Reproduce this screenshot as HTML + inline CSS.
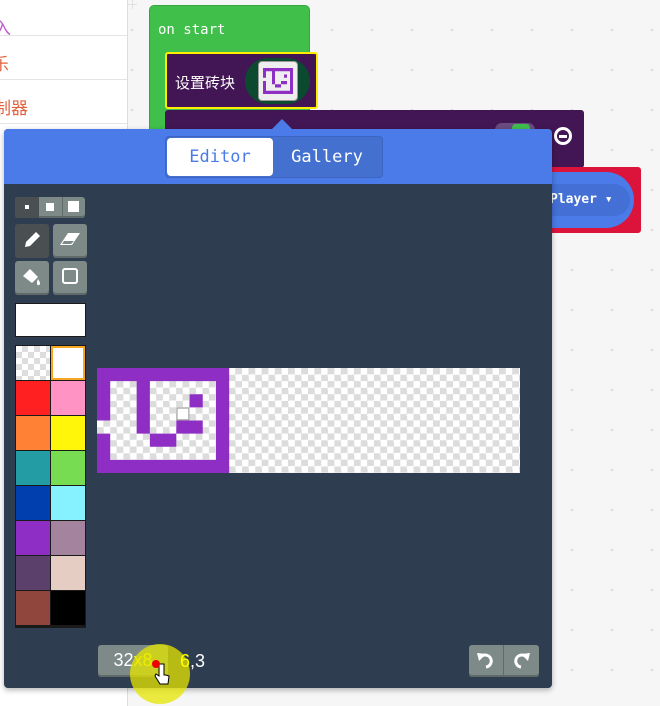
<!DOCTYPE html>
<html><head><meta charset="utf-8"><style>
body{margin:0;width:660px;height:706px;position:relative;overflow:hidden;background:#f6f6f6;font-family:"Liberation Sans","Noto Sans CJK SC",sans-serif}
.a{position:absolute}
.grid{left:128px;top:0;width:532px;height:706px;background-image:linear-gradient(#e2e2e2,#e2e2e2),linear-gradient(#e2e2e2,#e2e2e2);background-size:9px 1px,1px 9px;background-repeat:no-repeat}
.side{left:0;top:0;width:127px;height:706px;background:#fff;border-right:1px solid #ddd}
.ln{left:0;width:127px;height:1px;background:#e4e4e4}
.mono{font-family:"DejaVu Sans Mono","Liberation Mono",monospace}
.tb{background:#7e8a88;border-radius:3px;box-shadow:inset 0 -2px 0 #5f6968}
</style></head><body>
<div class="a" style="left:128px;top:0;width:532px;height:706px;background-image:linear-gradient(#e0e0e0,#e0e0e0),linear-gradient(#e0e0e0,#e0e0e0);background-size:9px 1px,1px 9px;background-position:0 4px,4px 0;background-repeat:no-repeat"></div>
<div class="a" style="left:128px;top:0;width:532px;height:706px;background:radial-gradient(circle,#dadada 1px,transparent 1.5px) 24px 10px/40px 40px"></div>
<div class="a side">
<div class="a ln" style="top:35px"></div><div class="a ln" style="top:79px"></div><div class="a ln" style="top:123px"></div>
<div class="a" style="left:-6px;top:14px;color:#c05ad0;font-size:17px">入</div>
<div class="a" style="left:-8px;top:50px;color:#e0623e;font-size:17px">乐</div>
<div class="a" style="left:-6px;top:94px;color:#e0623e;font-size:17px">制器</div>
</div>
<!-- on start -->
<div class="a" style="left:149px;top:5px;width:159px;height:140px;background:#40bf4a;border-radius:5px;border:1px solid #38a540"></div>
<div class="a mono" style="left:158px;top:22px;color:#fff;font-size:14px">on start</div>
<!-- purple big block -->
<div class="a" style="left:165px;top:110px;width:419px;height:58px;background:#421654;border-radius:3px"></div>
<div class="a" style="left:495px;top:123px;width:40px;height:14px;background:#6a4c80;border-radius:7px"></div>
<div class="a" style="left:512px;top:124px;width:18px;height:14px;background:#3fbd4c;border-radius:4px"></div>
<div class="a" style="left:554px;top:127px;width:18px;height:18px;border:3px solid #fff;border-radius:50%;box-sizing:border-box"><div class="a" style="left:2px;top:5px;width:8px;height:3px;background:#fff"></div></div>
<!-- red block -->
<div class="a" style="left:548px;top:167px;width:93px;height:66px;background:#dc143c;border-radius:3px"></div>
<div class="a" style="left:520px;top:172px;width:114px;height:56px;background:#4a7be8;border-radius:28px"></div>
<div class="a" style="left:520px;top:184px;width:110px;height:32px;background:#4470d6;border-radius:16px"></div>
<div class="a mono" style="left:550px;top:192px;color:#fff;font-size:13px;font-weight:bold">Player ▾</div>
<!-- set tile block -->
<div class="a" style="left:165px;top:52px;width:153px;height:57px;background:#421654;border:2px solid #ffee00;border-radius:3px;box-sizing:border-box"></div>
<div class="a" style="left:175px;top:72px;color:#fff;font-size:15px">设置砖块</div>
<div class="a" style="left:245px;top:58px;width:65px;height:46px;background:#0b4a2e;border-radius:23px"></div>
<div class="a" style="left:258px;top:61px;width:40px;height:40px;background:#eee;border-radius:4px;border:1px solid #999;box-sizing:border-box">
<svg width="30" height="26" style="position:absolute;left:4px;top:6px" viewBox="0 0 10 8" preserveAspectRatio="none"><path fill="#8e2ec4" d="M0 0h10v1H0zM0 7h10v1H0zM0 1h1v2H0zM0 4h1v3H0zM9 1h1v6H9zM3 1h1v4H3zM7 2h1v1H7zM6 4h2v1H6zM4 5h2v1H4z"/></svg></div>
<!-- dialog -->
<div class="a" style="left:4px;top:129px;width:548px;height:559px;background:#2e3d50;border-radius:4px;overflow:hidden;box-shadow:0 2px 6px rgba(0,0,0,.3)">
<div class="a" style="left:0;top:0;width:548px;height:55px;background:#4a7be8"></div>
</div>
<div class="a" style="left:271px;top:119px;width:0;height:0;border-left:11px solid transparent;border-right:11px solid transparent;border-bottom:11px solid #4a7be8"></div>
<div class="a" style="left:165px;top:136px;width:218px;height:42px;background:#4470d0;border-radius:4px;border:1px solid #3c64c0;box-sizing:border-box"></div>
<div class="a mono" style="left:167px;top:138px;width:106px;height:38px;background:#fff;border-radius:4px;color:#4a7be8;font-size:17px;text-align:center;line-height:38px">Editor</div>
<div class="a mono" style="left:273px;top:138px;width:108px;height:38px;color:#fff;font-size:17px;text-align:center;line-height:38px">Gallery</div>
<!-- tools -->
<div class="a tb" style="left:15px;top:197px;width:70px;height:21px"></div>
<div class="a" style="left:15px;top:197px;width:24px;height:21px;background:#4a4f52;border-radius:3px 0 0 3px"></div>
<div class="a" style="left:25px;top:205px;width:4px;height:4px;background:#fff"></div>
<div class="a" style="left:46px;top:203px;width:8px;height:8px;background:#fff"></div>
<div class="a" style="left:68px;top:201px;width:11px;height:11px;background:#fff"></div>
<div class="a" style="left:62px;top:197px;width:1px;height:21px;background:#5f6968"></div>
<div class="a" style="left:15px;top:224px;width:34px;height:34px;background:#4a4f52;border-radius:3px"></div>
<svg class="a" style="left:22px;top:230px" width="20" height="20" viewBox="0 0 20 20"><path fill="#fff" d="M14 2l4 4-10 10-5 1 1-5z"/></svg>
<div class="a tb" style="left:53px;top:224px;width:34px;height:34px"></div>
<svg class="a" style="left:58px;top:231px" width="24" height="18" viewBox="0 0 24 18"><path fill="#fff" d="M10 2h12l-8 12H2z"/><path fill="#7e8a88" d="M6 10h10l-3 3H4z"/></svg>
<div class="a tb" style="left:15px;top:261px;width:34px;height:34px"></div>
<svg class="a" style="left:20px;top:266px" width="24" height="24" viewBox="0 0 24 24"><path fill="#fff" d="M3 10l7-7 8 8-6 6z"/><path fill="#fff" d="M18 13c2 3 3 5 1 6s-3-2-1-6z"/></svg>
<div class="a tb" style="left:53px;top:261px;width:34px;height:34px"></div>
<div class="a" style="left:62px;top:268px;width:16px;height:16px;border:2px solid #fff;border-radius:3px;box-sizing:border-box"></div>
<div class="a" style="left:15px;top:303px;width:71px;height:34px;background:#fff;border:1px solid #1a1a1a;box-sizing:border-box"></div>
<!-- palette -->
<div class="a" style="left:15px;top:345px;width:71px;height:283px;background:#1a1a1a;display:grid;grid-template-columns:34px 34px;grid-template-rows:repeat(8,34px);gap:1px;padding:1px;box-sizing:border-box">
<div style="background:repeating-conic-gradient(#ddd 0 25%,#fff 0 50%) 0 0/12px 12px"></div>
<div style="background:#fff;border:2px solid #f5a623"></div>
<div style="background:#ff2121"></div><div style="background:#ff93c4"></div>
<div style="background:#ff8135"></div><div style="background:#fff609"></div>
<div style="background:#249ca3"></div><div style="background:#78dc52"></div>
<div style="background:#003fad"></div><div style="background:#87f2ff"></div>
<div style="background:#8e2ec4"></div><div style="background:#a4839f"></div>
<div style="background:#5c406c"></div><div style="background:#e5cdc4"></div>
<div style="background:#91463d"></div><div style="background:#000"></div>
</div>
<!-- canvas -->
<div class="a" style="left:97px;top:368px;width:423px;height:105px;background:repeating-conic-gradient(#dcdcdc 0 25%,#fff 0 50%) 0 0/13.2px 13.1px">
<svg width="423" height="105" viewBox="0 0 32 8" preserveAspectRatio="none" style="position:absolute;left:0;top:0"><path fill="#8e2ec4" d="M0 0h10v1H0zM0 7h10v1H0zM0 1h1v3H0zM0 5h1v2H0zM9 1h1v6H9zM3 1h1v4H3zM7 2h1v1H7zM6 4h2v1H6zM4 5h2v1H4z"/><rect x="6.05" y="3.05" width=".9" height=".9" fill="#fff" stroke="#aaa" stroke-width=".1"/></svg>
</div>
<!-- bottom -->
<div class="a tb" style="left:98px;top:645px;width:70px;height:32px;color:#fff;font-size:18px;text-align:center;line-height:30px">32<span style="color:#ff0">x8</span></div>
<div class="a" style="left:130px;top:644px;width:60px;height:60px;border-radius:50%;background:rgba(230,230,0,.75)"></div>
<div class="a" style="left:180px;top:651px;color:#fff;font-size:18px"><span style="color:#ff0">6</span>,3</div>
<div class="a tb" style="left:469px;top:645px;width:70px;height:32px"></div>
<div class="a" style="left:503px;top:645px;width:1px;height:32px;background:#5f6968"></div>
<svg class="a" style="left:476px;top:650px" width="20" height="20" viewBox="0 0 20 20"><path d="M6 6a6 6 0 1 1 4 11" fill="none" stroke="#fff" stroke-width="3"/><path fill="#fff" d="M1 3l9 1-7 7z"/></svg>
<svg class="a" style="left:511px;top:650px" width="20" height="20" viewBox="0 0 20 20"><path d="M14 6a6 6 0 1 0-4 11" fill="none" stroke="#fff" stroke-width="3"/><path fill="#fff" d="M19 3l-9 1 7 7z"/></svg>
<svg class="a" style="left:154px;top:662px" width="16" height="26" viewBox="0 0 16 26"><path d="M5 2v12l-3-2-1 2 5 8h8l1-8-3-1-2 0V2z" fill="#fff" stroke="#000" stroke-width="1"/></svg>
<div class="a" style="left:152px;top:660px;width:8px;height:8px;border-radius:50%;background:#e00"></div>
</body></html>
